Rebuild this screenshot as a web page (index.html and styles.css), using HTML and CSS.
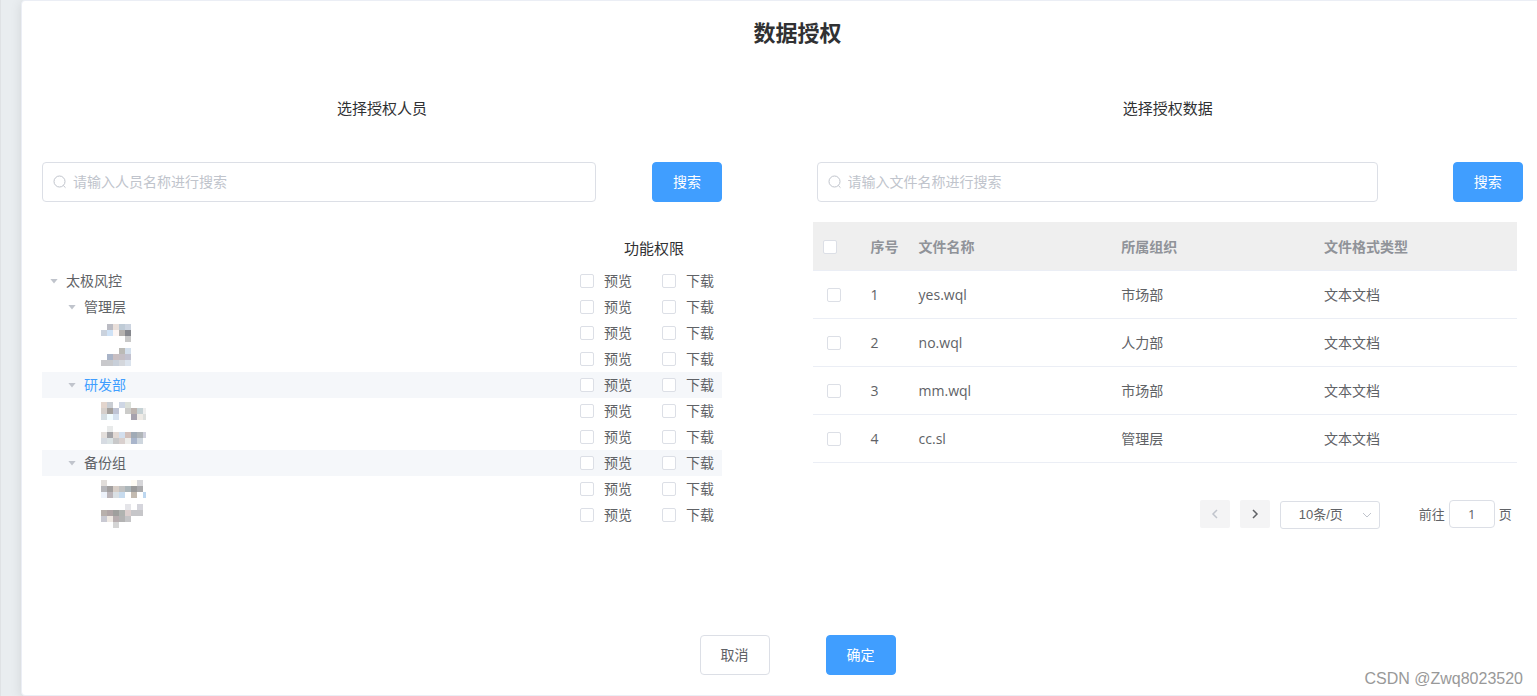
FILE: index.html
```html
<!DOCTYPE html>
<html lang="zh-CN">
<head>
<meta charset="utf-8">
<title>数据授权</title>
<link rel="stylesheet" href="styles.css">
</head>
<body>
<main class="card">
  <h1 class="title">数据授权</h1>
  <div class="columns">
    <section class="people">
      <h2 class="subtitle">选择授权人员</h2>
      <form class="search search-people">
        <div class="search-box">
          <svg class="search-icon" viewBox="0 0 14 14" aria-hidden="true"><circle cx="6.500" cy="6.500" r="5.500"/><path d="M10.300 10.500 12.500 12.700"/></svg>
          <input class="search-input" type="text" aria-label="人员名称" placeholder="请输入人员名称进行搜索">
        </div>
        <button class="btn btn-primary" type="button">搜索</button>
      </form>
      <div class="tree-head">功能权限</div>
      <ul class="tree" id="tree"></ul>
    </section>

    <section class="files">
      <h2 class="subtitle">选择授权数据</h2>
      <form class="search search-files">
        <div class="search-box">
          <svg class="search-icon" viewBox="0 0 14 14" aria-hidden="true"><circle cx="6.500" cy="6.500" r="5.500"/><path d="M10.300 10.500 12.500 12.700"/></svg>
          <input class="search-input" type="text" aria-label="文件名称" placeholder="请输入文件名称进行搜索">
        </div>
        <button class="btn btn-primary" type="button">搜索</button>
      </form>
      <div class="table-area">
        <table class="table">
          <colgroup><col class="col-small"><col class="col-small"><col><col><col></colgroup>
          <thead>
            <tr><th><input class="check" type="checkbox" aria-label="全选"></th><th>序号</th><th>文件名称</th><th>所属组织</th><th>文件格式类型</th></tr>
          </thead>
          <tbody>
            <tr><td class="cell-check"><input class="check" type="checkbox" aria-label="选择 yes.wql"></td><td>1</td><td>yes.wql</td><td>市场部</td><td>文本文档</td></tr>
            <tr><td class="cell-check"><input class="check" type="checkbox" aria-label="选择 no.wql"></td><td>2</td><td>no.wql</td><td>人力部</td><td>文本文档</td></tr>
            <tr><td class="cell-check"><input class="check" type="checkbox" aria-label="选择 mm.wql"></td><td>3</td><td>mm.wql</td><td>市场部</td><td>文本文档</td></tr>
            <tr><td class="cell-check"><input class="check" type="checkbox" aria-label="选择 cc.sl"></td><td>4</td><td>cc.sl</td><td>管理层</td><td>文本文档</td></tr>
          </tbody>
        </table>
        <nav class="pager" aria-label="分页">
          <button class="page-btn" type="button" disabled aria-label="上一页"><svg viewBox="0 0 12 12"><path d="M8 2 4 6l4 4"/></svg></button>
          <button class="page-btn" type="button" aria-label="下一页"><svg viewBox="0 0 12 12"><path d="M4 2l4 4-4 4"/></svg></button>
          <div class="size-box">
            <select class="size-select" aria-label="每页条数"><option>10条/页</option></select>
            <svg class="size-arrow" viewBox="0 0 10 10" aria-hidden="true"><path d="M1 3l4 4 4-4"/></svg>
          </div>
          <label class="jump">前往<input class="jump-input" type="text" value="1">页</label>
        </nav>
      </div>
    </section>
  </div>
  <div class="actions">
    <button class="btn" type="button">取消</button>
    <button class="btn btn-primary" type="button">确定</button>
  </div>
</main>
<div class="watermark">CSDN @Zwq8023520</div>
<script src="tree.js"></script>
</body>
</html>
```
FILE: styles.css
```css
* { box-sizing: border-box; }

body {
  margin: 0;
  padding-left: 20px;
  position: relative;
  overflow: hidden;
  border-left: 1px solid #dfe2e5;
  background: #e9edf0;
  color: #303133;
  font: 14px/20px "Open Sans", "Noto Sans CJK SC", sans-serif;
}

button, input, select { font: inherit; color: inherit; }

.card {
  margin-right: -37px;
  padding: 15px 20px 20px;
  background: #fff;
  border: 1px solid #ebeef5;
  border-radius: 4px;
  box-shadow: 0 2px 12px rgba(0, 0, 0, 0.1);
}

.title {
  margin: 0 0 50px;
  font-size: 22px;
  line-height: 32px;
  font-weight: 700;
  text-align: center;
}

.columns {
  display: grid;
  grid-template-columns: 45% 47%;
  column-gap: 6%;
}

.subtitle {
  margin: 0 0 44px;
  font-size: 15px;
  line-height: 20px;
  font-weight: 400;
  text-align: center;
}

.search { display: flex; margin: 0 0 20px; }
.search-people { gap: 56px; }
.search-files { gap: 75px; padding-left: 4px; }

.search-box { position: relative; flex: 1; }

.search-icon {
  position: absolute;
  left: 11px;
  top: 13px;
  width: 14px;
  height: 14px;
  fill: none;
  stroke: #c0c4cc;
}

.search-input {
  display: block;
  width: 100%;
  height: 40px;
  padding: 0 30px 1px;
  border: 1px solid #dcdfe6;
  border-radius: 4px;
  background: #fff;
  outline: none;
}

.search-input::placeholder { color: #c0c4cc; opacity: 1; }

.btn {
  width: 70px;
  height: 40px;
  padding: 0;
  border: 1px solid #dcdfe6;
  border-radius: 4px;
  background: #fff;
  color: #606266;
}

.btn-primary { background: #409eff; border-color: #409eff; color: #fff; }

.tree-head {
  margin: 0 0 9px;
  padding: 15px 38px 0 0;
  font-size: 15px;
  line-height: 22px;
  text-align: right;
}

.tree { margin: 0; padding: 0; list-style: none; color: #606266; }

.tree-row { display: flex; align-items: center; height: 26px; }
.level-1 { padding-left: 8px; }
.level-2 { padding-left: 26px; }
.level-3 { padding-left: 59px; }
.shaded { background: #f5f7fa; }
.current .tree-name { color: #409eff; }

.caret {
  width: 8px;
  height: 5px;
  margin-right: 8px;
  background: #c0c4cc;
  clip-path: polygon(0 0, 100% 0, 50% 100%);
}

.mosaic { display: block; width: 48px; height: 26px; }

.perms { display: flex; margin-left: auto; }

.perm { display: flex; align-items: center; gap: 10px; width: 82px; }
.perm:last-child { width: 60px; }

.check {
  display: block;
  appearance: none;
  width: 14px;
  height: 14px;
  margin: 0;
  border: 1px solid #dcdfe6;
  border-radius: 2px;
  background: #fff;
}

.table-area { padding-right: 6px; }

.table {
  width: 100%;
  table-layout: fixed;
  border-collapse: separate;
  border-spacing: 0;
  color: #606266;
}

.col-small { width: 48px; }

.table th, .table td {
  height: 48px;
  padding: 0 10px;
  border-bottom: 1px solid #ebeef5;
  text-align: left;
}

.table th {
  height: 49px;
  padding-top: 1px;
  background: #efefef;
  color: #909399;
  font-weight: 700;
}

.table .cell-check { padding-left: 14px; }

.pager {
  display: flex;
  justify-content: flex-end;
  gap: 10px;
  padding: 37px 5px 0 0;
  font-size: 13px;
  color: #606266;
}

.page-btn {
  display: flex;
  align-items: center;
  justify-content: center;
  width: 30px;
  height: 28px;
  padding: 0;
  border: 0;
  border-radius: 2px;
  background: #f4f4f5;
}

.page-btn svg {
  width: 12px;
  height: 12px;
  fill: none;
  stroke: #606266;
  stroke-width: 1.500;
}

.page-btn:disabled svg { stroke: #c0c4cc; }

.size-box { position: relative; width: 100px; padding-top: 1px; }

.size-select {
  display: block;
  appearance: none;
  width: 100%;
  height: 28px;
  padding: 0 18px;
  border: 1px solid #dcdfe6;
  border-radius: 3px;
  background: #fff;
  font-family: "Liberation Sans", "Noto Sans CJK SC", sans-serif;
}

.size-arrow {
  position: absolute;
  right: 8px;
  top: 10px;
  width: 10px;
  height: 10px;
  fill: none;
  stroke: #c0c4cc;
}

.jump { display: flex; align-items: center; gap: 4px; height: 28px; margin-left: 29px; }

.jump-input {
  width: 46px;
  height: 28px;
  padding: 0;
  border: 1px solid #dcdfe6;
  border-radius: 4px;
  background: #fff;
  text-align: center;
}

.actions {
  display: flex;
  justify-content: center;
  gap: 56px;
  margin-top: 106px;
}

.watermark {
  position: absolute;
  right: 14px;
  bottom: 7px;
  color: #999;
  font: 16px/20px "Liberation Sans", sans-serif;
}
```
FILE: tree.js
```js
// Each hidden name is a list of pixel rows; "-" leaves a 6px cell empty.
const rows = [
  { level: 1, name: "太极风控" },
  { level: 2, name: "管理层" },
  { level: 3, top: 4, cells: ["- bbbcc4 e9dfda bfcbd6 ccd4e0", "cad2dd cfe2f6 fcf5f3 b5b2af 85878d", "- - - - c8c8c8"] },
  { level: 3, top: 2, cells: ["- - - bbbab6 d3dfec", "- a9b4c8 c9bfc2 c5bfc5 c2c2d0", "c8c8cb c8c9cc c8cfd9 d4d7dc dbe3ed"] },
  { level: 2, name: "研发部", state: "shaded current" },
  { level: 3, top: 4, cells: ["e3d5cd c9cdd3 - ced6e4 dbe0da", "d5cfcb a5a19d bfc4d4 - ccccca bdb4af c6d2d5 eeeeee", "d5dee3 f1fcff d7e3f0 - - a6a2ae efebe6 dddfdd"] },
  { level: 3, top: 2, cells: ["- e8eaea", "e3dedb a4a4a8 e2d9d4 d3dfee d2c0bb a1abb6 b0b5b9 cfd0dc", "d6dbe2 dbe3e5 c8c8c9 d9d0ce ededeb a9b5cb ced6de"] },
  { level: 2, name: "备份组", state: "shaded" },
  { level: 3, top: 4, cells: ["e1ddda - - - - fefbf4 d6d6d9", "b6b6ba a29f9f d7cec7 c2c2c2 acb6ba 9a9a9a aaaaac", "edf2fa bbb5b9 dae0e4 c7dbee - c3bab0 - bdd7f0"] },
  { level: 3, top: 2, cells: ["- - - - e5e5e9 - d5d5dc", "b8b0ac b0a5a6 9f9f9d b0b3b0 dccfce c6c6c9 c6c6c9", "c9c9d2 efe9e3 b7adaf b3b3b3 c5c5c7", "- - d5d5d5"] }
];

function mosaic(row) {
  const rects = row.cells.map((line, y) => line.split(" ").map((color, x) =>
    color === "-" ? "" : `<rect x="${x * 6}" y="${row.top + y * 6}" width="${x === 7 ? 3 : 6}" height="6" fill="#${color}"/>`
  ).join("")).join("");
  return `<svg class="mosaic" viewBox="0 0 48 26" shape-rendering="crispEdges" aria-hidden="true">${rects}</svg>`;
}

document.getElementById("tree").innerHTML = rows.map(row => `
  <li class="tree-row level-${row.level} ${row.state || ""}">
    ${row.cells ? mosaic(row) : `<span class="caret"></span><span class="tree-name">${row.name}</span>`}
    <div class="perms">
      <label class="perm"><input class="check" type="checkbox">预览</label>
      <label class="perm"><input class="check" type="checkbox">下载</label>
    </div>
  </li>`).join("");
```
